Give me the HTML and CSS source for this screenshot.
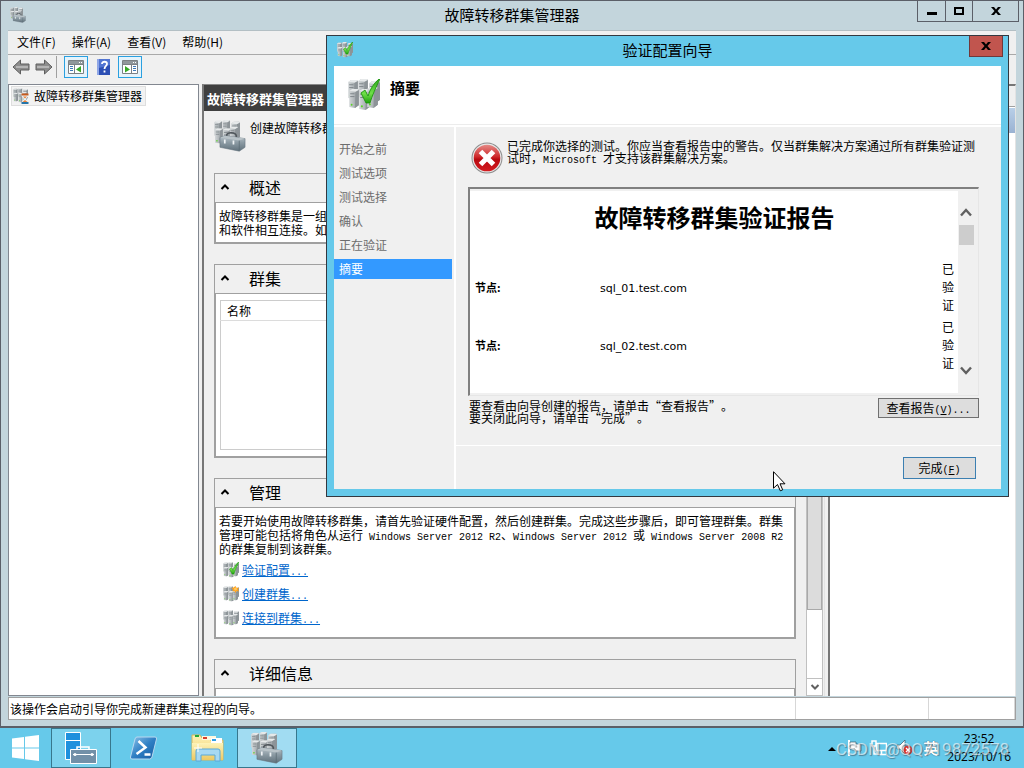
FILE: index.html
```html
<!DOCTYPE html>
<html lang="zh-CN">
<head>
<meta charset="utf-8">
<meta name="viewport" content="width=device-width, initial-scale=1">
<title>故障转移群集管理器</title>
<link rel="stylesheet" href="styles.css">
</head>
<body>
<svg class="sprite" width="0" height="0" aria-hidden="true">
  <defs>
    <linearGradient id="steel" x1="0" x2="1" y1="0" y2="0">
      <stop offset="0" stop-color="#d3d7d9"/><stop offset=".5" stop-color="#b0b6b9"/><stop offset="1" stop-color="#868d91"/>
    </linearGradient>
    <linearGradient id="green" x1="0" x2="0" y1="0" y2="1">
      <stop offset="0" stop-color="#2fa51f"/><stop offset=".6" stop-color="#6fe048"/><stop offset="1" stop-color="#22a010"/>
    </linearGradient>
    <linearGradient id="box" x1="0" x2="0" y1="0" y2="1">
      <stop offset="0" stop-color="#b9c4ca"/><stop offset=".45" stop-color="#8b9aa3"/><stop offset="1" stop-color="#60717b"/>
    </linearGradient>
    <linearGradient id="red" x1="0" x2="0" y1="0" y2="1">
      <stop offset="0" stop-color="#e58a86"/><stop offset=".45" stop-color="#cf2a2c"/><stop offset=".55" stop-color="#b80a10"/><stop offset="1" stop-color="#d41c20"/>
    </linearGradient>
    <linearGradient id="psBlue" x1="0" x2="1" y1="0" y2="1">
      <stop offset="0" stop-color="#8ec4ea"/><stop offset=".5" stop-color="#2f7fc4"/><stop offset="1" stop-color="#155a9f"/>
    </linearGradient>
    <linearGradient id="folder" x1="0" x2="0" y1="0" y2="1">
      <stop offset="0" stop-color="#fdf3b8"/><stop offset="1" stop-color="#edc963"/>
    </linearGradient>
  </defs>
  <symbol id="tower" viewBox="0 0 10 20">
    <path d="M0 2 3 0h6l1 1v16l-4 3-6-1z" fill="url(#steel)"/>
    <path d="M6.500 3 10 1v16l-4 3z" fill="#8d9498"/>
    <path d="M0 2 3 0h6l1 1-3.500 2z" fill="#e6e9ea"/>
    <path d="M1 5h4.500M1 8h4.500" stroke="#7c8387" stroke-width="1"/>
    <circle cx="2.500" cy="16.500" r="1" fill="#5bd327"/>
  </symbol>
  <symbol id="towers" viewBox="0 0 32 32">
    <use href="#tower" x="0" y="1" width="10" height="19"/>
    <use href="#tower" x="10" y="0" width="10" height="19"/>
    <use href="#tower" x="21" y="0" width="11" height="26"/>
    <use href="#tower" x="1" y="10" width="10" height="19"/>
    <use href="#tower" x="11" y="10" width="11" height="21"/>
    <use href="#tower" x="19" y="8" width="11" height="21"/>
  </symbol>
  <symbol id="check-mark" viewBox="0 0 32 32">
    <path d="M13 14 17 11 20 17C22 10 26 4 31 0h1C28 8 24 17 22 24h-4z" fill="url(#green)" stroke="#159208" stroke-width=".8"/>
  </symbol>
  <symbol id="cluster-ok" viewBox="0 0 32 32">
    <use href="#towers" width="32" height="32"/><use href="#check-mark" width="32" height="32"/>
  </symbol>
  <symbol id="cluster-new" viewBox="0 0 32 32">
    <use href="#towers" width="32" height="32"/>
    <path d="m25 0 2 4 5-1-2 4 2 4-5-1-2 4-2-4-4 1 1-4-3-3 4-1z" fill="#ffa21c"/><circle cx="25" cy="6" r="3" fill="#ffc85e"/>
  </symbol>
  <symbol id="toolbox" viewBox="0 0 28 20">
    <path d="M8 6V3c1-3 9-3 10 1v3" fill="none" stroke="#50575c" stroke-width="1.600"/>
    <path d="M1 6 6 4l21 3v9l-6 4L1 16z" fill="url(#box)" stroke="#66757e" stroke-width=".6"/>
    <path d="M1 6 6 4l21 3-6 2z" fill="#b9c3c8"/>
    <path d="M21 9v10" stroke="#586973" stroke-width=".8"/>
    <path d="M6 8v4M15 9v4" stroke="#eef2f4" stroke-width="1.800"/>
  </symbol>
  <symbol id="cluster-manager" viewBox="0 0 32 32">
    <use href="#towers" width="26" height="26"/><use href="#toolbox" x="5" y="11" width="27" height="21"/>
  </symbol>
  <symbol id="cluster-wait" viewBox="0 0 32 32">
    <use href="#towers" width="30" height="30"/>
    <path d="M17 12h14v4l-5 6 5 6v4H17v-4l5-6-5-6z" fill="#e8f3fa"/>
    <path d="M17 11h14v4H17z" fill="#c85a1c"/><path d="M17 28h14v4H17z" fill="#2775a8"/>
    <path d="m20 17 4 4 4-4zM19 28l5-4 5 4z" fill="#f08334"/>
  </symbol>
  <symbol id="caret-up" viewBox="0 0 10 8"><path d="M1.500 6 5 2.500 8.500 6" fill="none" stroke="currentColor" stroke-width="2"/></symbol>
  <symbol id="chevron-up" viewBox="0 0 12 10"><path d="M1 8.500 6 3l5 5.500" fill="none" stroke="currentColor" stroke-width="2.400"/></symbol>
  <symbol id="pane-icon" viewBox="0 0 16 14">
    <path d="M.5.5h15v13H.5z" fill="#fff" stroke="#7b8084"/><path d="M1 1h14v3H1z" fill="#90979b"/>
    <path d="M11 2.500h1M13 2.500h1" stroke="#fff"/><path d="M6.500 4v10M1 4.500h14" stroke="#7b8084"/>
    <path d="M2 6.500h3M2 8.500h3M2 10.500h3" stroke="#3e79b8"/>
  </symbol>
</svg>

<div class="desktop">
  <main class="window">
    <header class="titlebar">
      <svg class="icon16" aria-hidden="true"><use href="#cluster-manager"/></svg>
      <h1 class="window-title">故障转移群集管理器</h1>
      <div class="window-controls">
        <button class="win-btn" aria-label="最小化"><svg width="10" height="10"><path d="M0 6h10v3H0z"/></svg></button>
        <button class="win-btn" aria-label="最大化"><svg width="10" height="10"><path d="M1 2h8v6H1z" fill="none" stroke="#000" stroke-width="2"/></svg></button>
        <button class="win-btn win-close" aria-label="关闭"><svg width="10" height="10"><path d="M0 1h3l2 2.500L7 1h3L6.500 5 10 9H7L5 6.500 3 9H0l3.500-4z"/></svg></button>
      </div>
    </header>

    <nav class="menubar">
      <button>文件(F)</button><button>操作(A)</button><button>查看(V)</button><button>帮助(H)</button>
    </nav>

    <div class="toolbar">
      <button class="tool" aria-label="后退"><svg width="18" height="16"><path d="M1 8 8.500 1v4H17v6H8.500v4z" fill="#8d8d8d" stroke="#5e5e5e"/><path d="M4 8h12" stroke="#b5b5b5" stroke-width="2"/></svg></button>
      <button class="tool" aria-label="前进"><svg width="18" height="16"><path d="M17 8 9.500 1v4H1v6h8.500v4z" fill="#8d8d8d" stroke="#5e5e5e"/><path d="M2 8h12" stroke="#b5b5b5" stroke-width="2"/></svg></button>
      <span class="divider"></span>
      <button class="tool tool-on" aria-label="显示/隐藏控制台树"><svg width="16" height="14"><use href="#pane-icon"/><path d="m13 6-5 3.500 5 3z" fill="#35a825"/></svg></button>
      <button class="tool tool-help" aria-label="帮助"><svg width="13" height="16"><path d="M0 0h13v16H0z" fill="#2d4fb4"/><path d="M0 0h2v16H0z" fill="#8fa6e6"/><path d="M2 0h11v6L2 9z" fill="#5275d2"/><path d="M5 5c0-3 5-3 5 0 0 2-2.500 2-2.500 5M7.500 11.500v2" fill="none" stroke="#fff" stroke-width="1.800"/></svg></button>
      <button class="tool tool-on" aria-label="显示/隐藏操作窗格"><svg width="16" height="14"><path d="M.5.5h15v13H.5z" fill="#fff" stroke="#7b8084"/><path d="M1 1h14v3H1z" fill="#90979b"/><path d="M11 2.500h1M13 2.500h1" stroke="#fff"/><path d="M9.500 4v10M1 4.500h14" stroke="#7b8084"/><path d="M11 6.500h3M11 8.500h3M11 10.500h3" stroke="#3e79b8"/><path d="m3 6 5 3.500-5 3z" fill="#35a825"/></svg></button>
    </div>

    <div class="panes">
      <aside class="tree">
        <button class="tree-node"><svg class="icon16" aria-hidden="true"><use href="#cluster-wait"/></svg>故障转移群集管理器</button>
      </aside>

      <section class="center">
        <h2 class="center-title">故障转移群集管理器</h2>
        <div class="center-main">
          <div class="content">
            <div class="intro"><svg class="icon32" aria-hidden="true"><use href="#cluster-manager"/></svg><p>创建故障转移群集</p></div>
            <section class="card">
              <h3 class="card-head"><svg class="caret" aria-hidden="true"><use href="#caret-up"/></svg>概述</h3>
              <div class="card-body"><p>故障转移群集是一组<br>和软件相互连接。如</p></div>
            </section>
            <section class="card">
              <h3 class="card-head"><svg class="caret" aria-hidden="true"><use href="#caret-up"/></svg>群集</h3>
              <div class="card-body card-list">
                <table class="cluster-table"><thead><tr><th>名称</th></tr></thead><tbody><tr><td></td></tr></tbody></table>
              </div>
            </section>
            <section class="card">
              <h3 class="card-head"><svg class="caret" aria-hidden="true"><use href="#caret-up"/></svg>管理</h3>
              <div class="card-body card-manage">
                <p>若要开始使用故障转移群集，请首先验证硬件配置，然后创建群集。完成这些步骤后，即可管理群集。群集<br>管理可能包括将角色从运行<span class="mono"> Windows Server 2012 R2</span>、<span class="mono">Windows Server 2012 </span>或<span class="mono"> Windows Server 2008 R2</span><br>的群集复制到该群集。</p>
                <ul class="links">
                  <li><svg class="icon16" aria-hidden="true"><use href="#cluster-ok"/></svg><a href="#validate">验证配置<span class="mono">...</span></a></li>
                  <li><svg class="icon16" aria-hidden="true"><use href="#cluster-new"/></svg><a href="#create">创建群集<span class="mono">...</span></a></li>
                  <li><svg class="icon16" aria-hidden="true"><use href="#towers"/></svg><a href="#connect">连接到群集<span class="mono">...</span></a></li>
                </ul>
              </div>
            </section>
            <section class="card">
              <h3 class="card-head"><svg class="caret" aria-hidden="true"><use href="#caret-up"/></svg>详细信息</h3>
              <div class="card-body card-details"></div>
            </section>
          </div>
          <div class="scrollbar">
            <button class="scroll-btn" aria-label="向上滚动"><svg class="caret" aria-hidden="true"><use href="#caret-up"/></svg></button>
            <div class="scroll-thumb"></div>
            <div class="scroll-rest"></div>
            <button class="scroll-btn" aria-label="向下滚动"><svg class="caret flip" aria-hidden="true"><use href="#caret-up"/></svg></button>
          </div>
        </div>
      </section>

      <aside class="actions">
        <div class="actions-head"></div>
        <div class="actions-group"></div>
      </aside>
    </div>

    <footer class="statusbar"><span class="status-text">该操作会启动引导你完成新建群集过程的向导。</span><span class="status-a"></span><span class="status-b"></span></footer>
  </main>

  <footer class="taskbar">
    <button class="task task-start" aria-label="开始"><svg width="28" height="28"><path d="M0 4.500 12 3v10.500H0zM13 2.800 27 1v12.500H13zM0 14.500h12V25L0 23.500zM13 14.500h14V27l-14-1.800z" fill="#fff"/></svg></button>
    <button class="task task-open" aria-label="服务器管理器"><svg width="32" height="32"><path d="M.5.500h15v27h-15z" fill="#1e90dd" stroke="#fff"/><path d="M0 8.500h16" stroke="#fff"/><path d="M12 17v-2h12v2" fill="none" stroke="#fff" stroke-width="1.500"/><path d="M5.500 17.500h26v14h-26z" fill="#7290a8" stroke="#fff"/><path d="M8 22.500h21" stroke="#fff"/><circle cx="10" cy="22.500" r="1.500" fill="#fff"/><circle cx="27" cy="22.500" r="1.500" fill="#fff"/></svg></button>
    <button class="task task-ps" aria-label="PowerShell"><svg width="28" height="24"><path d="M7 1h18q2 0 1.500 2L22 21q-.5 2-2.500 2H2Q0 23 .5 21L5 3q.5-2 2-2z" fill="url(#psBlue)" stroke="#b8d8f0"/><path d="m8.500 5 7 6.500-9 6.500M14.500 18.500h6" fill="none" stroke="#fff" stroke-width="2.500"/></svg></button>
    <button class="task task-files" aria-label="文件资源管理器"><svg width="33" height="30"><path d="M1 5V2h8l2 3h6l2 2h13v20H1z" fill="url(#folder)" stroke="#d6b65a"/><path d="M4 2h4v2H4z" fill="#23a83a"/><path d="M11 3h14v4H11z" fill="#fff8df"/><path d="M12 4h4v2h-4z" fill="#d8402d"/><path d="M20 5h11v5H20z" fill="#fff"/><path d="M21 6h4v2h-4z" fill="#2f9fe6"/><path d="M1 10h31v17H1z" fill="url(#folder)"/><path d="M5 28V18q0-2 2-2h20q2 0 2 2v10h-5v-6H10v6z" fill="#a7d9f3" stroke="#5aa9d8"/><path d="M7 11v8M3 15h8" stroke="#fff"/></svg></button>
    <button class="task task-active" aria-label="故障转移群集管理器"><svg class="icon32" aria-hidden="true"><use href="#cluster-manager"/></svg></button>
    <div class="tray">
      <svg width="8" height="5"><path d="M0 5 4 1l4 4z"/></svg>
      <svg class="tray-flag" width="14" height="16"><path d="M1 0v16" stroke="#fff" stroke-width="2"/><path d="M2 2h6v2h5v7H7V9H2z" fill="#fff" stroke="#34596b" stroke-width=".7"/></svg>
      <svg width="16" height="16"><path d="M5.500 3.500h10v7h-10zM10.500 11v3M7 14.500h8" fill="#66c9ea" stroke="#fff" stroke-width="1.500"/><path d="M1 1h4v5H1zM3 6v8h4" fill="none" stroke="#fff" stroke-width="1.500"/></svg>
      <svg class="tray-sound" width="18" height="18"><path d="M1 6h3l5-5v14l-5-5H1z" fill="#fff" stroke="#34596b" stroke-width=".7"/><circle cx="12" cy="11" r="4.500" fill="#d8332b"/><path d="m10 9 4 4m0-4-4 4" stroke="#fff" stroke-width="1.300"/></svg>
      <span class="ime">英</span>
      <time class="clock"><span>23:52</span><span>2023/10/16</span></time>
    </div>
  </footer>

  <section class="dialog" role="dialog" aria-labelledby="wizard-title">
    <header class="dialog-bar">
      <svg class="icon16" aria-hidden="true"><use href="#cluster-ok"/></svg>
      <h2 class="dialog-title" id="wizard-title">验证配置向导</h2>
      <button class="dialog-close" aria-label="关闭"><svg width="10" height="10"><path d="M0 1h3l2 2.500L7 1h3L6.500 5 10 9H7L5 6.500 3 9H0l3.500-4z"/></svg></button>
    </header>
    <div class="dialog-inner">
      <div class="dialog-head"><svg class="icon32" aria-hidden="true"><use href="#cluster-ok"/></svg><h3>摘要</h3></div>
      <div class="dialog-body">
        <ol class="steps">
          <li>开始之前</li><li>测试选项</li><li>测试选择</li><li>确认</li><li>正在验证</li><li class="step-current" aria-current="step">摘要</li>
        </ol>
        <div class="page">
          <div class="page-main">
            <div class="notice">
              <svg class="icon32" viewBox="0 0 32 32" aria-hidden="true"><circle cx="16" cy="16" r="15.500" fill="#8c8c8c"/><circle cx="16" cy="16" r="14.500" fill="#e8e8e8"/><circle cx="16" cy="16" r="13.300" fill="url(#red)"/><path d="m9.500 9.500 13 13m0-13-13 13" stroke="#fff" stroke-width="5"/></svg>
              <p>已完成你选择的测试。你应当查看报告中的警告。仅当群集解决方案通过所有群集验证测<br>试时，<span class="mono">Microsoft </span>才支持该群集解决方案。</p>
            </div>
            <div class="report">
              <div class="report-page">
                <h4>故障转移群集验证报告</h4>
                <table class="nodes">
                  <tr><th scope="row">节点:</th><td>sql_01.test.com</td><td class="node-state">已验证</td></tr>
                  <tr><th scope="row">节点:</th><td>sql_02.test.com</td><td class="node-state">已验证</td></tr>
                </table>
              </div>
              <div class="report-scroll">
                <svg class="chevron" aria-hidden="true"><use href="#chevron-up"/></svg>
                <div class="report-thumb"></div>
                <svg class="chevron flip" aria-hidden="true"><use href="#chevron-up"/></svg>
              </div>
            </div>
            <div class="after-report">
              <p>要查看由向导创建的报告，请单击“查看报告”。<br>要关闭此向导，请单击“完成”。</p>
              <button class="btn btn-report">查看报告<span class="mono">(<u>V</u>)...</span></button>
            </div>
          </div>
          <div class="page-foot"><button class="btn btn-finish">完成<span class="mono">(<u>F</u>)</span></button></div>
        </div>
      </div>
    </div>
  </section>

  <svg class="cursor" width="13" height="21" aria-hidden="true"><path d="M.5.700v16.500l4-3.700 2.800 6.300 2.400-1-2.700-6h5z" fill="#fff" stroke="#000"/></svg>
  <span class="watermark">CSDN @QQ719872578</span>
</div>
</body>
</html>
```
FILE: styles.css
```css
* { box-sizing: border-box; }
html, body { height: 100%; }
body {
  margin: 0;
  font: 12px/14px "Noto Sans CJK SC", sans-serif;
  text-spacing-trim: space-all;
  color: #000;
  background: #66c9ea;
}
h1, h2, h3, h4, p, ul, ol { margin: 0; padding: 0; font-weight: 400; }
ul, ol { list-style: none; }
button { margin: 0; padding: 0; border: 0; background: none; color: inherit; font: inherit; }
svg { display: block; flex: none; }
.sprite { position: absolute; }
.mono { font-family: "Liberation Mono", monospace; font-size: 10px; line-height: 1px; white-space: pre; }
.icon16 { width: 16px; height: 16px; }
.icon32 { width: 32px; height: 32px; }
.caret { width: 10px; height: 8px; }
.flip { transform: rotate(180deg); }

.desktop { position: relative; height: 100vh; overflow: hidden; display: flex; flex-direction: column; }

.window {
  flex: 1; min-height: 0;
  display: flex; flex-direction: column;
  padding: 0 7px 6px;
  border: 1px solid #5b5f68; border-bottom-width: 2px;
  background: #c3d5dc;
}
.titlebar { display: grid; grid-template-columns: 1fr auto 1fr; align-items: start; height: 29px; padding: 0 2px; flex: none; }
.titlebar .icon16 { margin-top: 6px; }
.window-title { font-size: 15px; line-height: 28px; }
.window-controls { justify-self: end; display: flex; border: 1px solid #5b5f68; border-top: 0; margin-right: -5px; }
.win-btn { display: grid; place-items: center; width: 27px; height: 20px; }
.win-btn + .win-btn { border-left: 1px solid #5b5f68; }
.win-close { width: 46px; }

.menubar { display: flex; gap: 16px; height: 25px; padding: 0 9px 2px; border-top: 1px solid #b3bfc4; border-bottom: 1px solid #a9a9a9; background: #f0f0f0; flex: none; }
.toolbar { display: flex; align-items: center; height: 29px; padding: 0 1px 5px; background: #f0f0f0; flex: none; }
.tool { display: grid; place-items: center; width: 23px; height: 22px; }
.tool-on { width: 24px; border: 1px solid #2aa0e0; background: #e5f3fb; }
.tool-help { width: 30px; }
.divider { width: 1px; height: 22px; background: #a0a0a0; margin: 0 7px 0 1px; }

.panes { flex: 1; min-height: 0; display: grid; grid-template-columns: 191px minmax(0, 1fr) 188px; column-gap: 3px; background: #f0f0f0; }
.tree { border: 1px solid #828790; background: #fff; padding: 1px 2px; }
.tree-node { display: flex; align-items: center; gap: 5px; height: 20px; padding: 0 3px 1px 1px; border: 1px solid #dedede; background: #f2f2f2; }

.center { display: flex; flex-direction: column; min-height: 0; border-left: 2px solid #777; border-top: 1px solid #888; border-right: 1px solid #e3e3e3; }
.center-title { height: 26px; padding-left: 3px; background: #3f3f3f; color: #fff; font-size: 13px; font-weight: 700; line-height: 28px; flex: none; }
.center-main { flex: 1; min-height: 0; display: flex; }
.content { flex: 1; min-width: 0; overflow: hidden; padding: 9px 10px 0; }
.intro { display: flex; gap: 4px; height: 33px; margin-bottom: 20px; }
.intro p { padding-top: 1px; }
.card { margin-bottom: 20px; border: 1px solid #a0a0a0; border-bottom-width: 2px; background: #f0f0f0; }
.card-head { display: flex; align-items: center; gap: 19px; height: 28px; padding: 0 0 2px 5px; font-size: 16px; }
.card-body { padding: 6px 3px 5px; border: 1px solid #a0a0a0; border-bottom: 0; background: #fff; }
.card-list { padding: 6px 4px; }
.cluster-table { width: 100%; height: 150px; border: 1px solid #ccc; border-collapse: collapse; }
.cluster-table th { height: 20px; padding: 0 0 0 6px; border-bottom: 1px solid #dcdcdc; font-weight: 400; text-align: left; }
.card-manage { padding-bottom: 5px; }
.links { padding: 2px 4px; }
.links li { display: flex; align-items: center; gap: 3px; height: 24px; }
.links a { color: #0066cc; text-decoration: underline; }
.card-details { height: 40px; }

.scrollbar { width: 17px; margin-right: 1px; display: flex; flex-direction: column; border: 1px solid #c0c0c0; background: #fff; flex: none; }
.scroll-btn { display: grid; place-items: center; height: 16px; color: #606060; flex: none; }
.scroll-thumb { flex: 7; border: 1px solid #a9a9a9; background: #dcdcdc; }
.scroll-rest { flex: 1; border-bottom: 1px solid #c0c0c0; }

.actions { border-left: 2px solid #777; border-top: 2px solid #777; border-right: 1px solid #e3e3e3; background: #fff; }
.actions-head { height: 21px; border-bottom: 1px solid #a0a0a0; background: #f0f0f0; }
.actions-group { height: 25px; margin-top: 1px; background: linear-gradient(#b8cfe8, #9ab2d2); }

.statusbar { display: flex; height: 23px; margin-top: 1px; border: 1px solid #a0a0a0; background: #fff; line-height: 22px; flex: none; }
.status-text { flex: 1; padding-left: 1px; }
.status-a { width: 133px; border-left: 1px solid #d7d7d7; }
.status-b { width: 87px; border-left: 1px solid #d7d7d7; border-right: 1px solid #d7d7d7; }

.taskbar { display: flex; height: 40px; background: #66c9ea; flex: none; }
.task { display: grid; place-items: center; width: 60px; }
.task-start { width: 51px; }
.task-open { border: 1px solid #37778d; background: #7cd2ed; }
.task-ps { width: 66px; }
.task-active { border: 1px solid #37778d; background: #a1dcf2; }
.tray { display: flex; align-items: center; gap: 9px; margin-left: auto; padding-right: 13px; }
.tray-flag { margin-left: 3px; }
.ime { color: #fff; font-size: 15px; font-weight: 700; text-shadow: 0 0 1px #123; }
.clock { display: flex; flex-direction: column; align-items: center; font: 12px/18px "Open Sans", sans-serif; }

.dialog { position: absolute; left: 326px; right: 15px; top: 35px; padding: 0 7px 7px; border: 1px solid #333840; background: #66c9ea; }
.dialog-bar { display: grid; grid-template-columns: 1fr auto 1fr; align-items: start; height: 30px; padding: 0 3px; }
.dialog-bar .icon16 { margin-top: 6px; }
.dialog-title { font-size: 15px; line-height: 28px; }
.dialog-close { justify-self: end; display: grid; place-items: center; width: 34px; height: 21px; margin-right: -5px; border: 1px solid #71383a; border-top: 0; background: #c1554e; }
.dialog-inner { background: #f0f0f0; }
.dialog-head { display: flex; gap: 10px; height: 61px; padding: 13px 14px 0; border-bottom: 2px solid #fff; background: linear-gradient(#fff 58px, #ececec 58px); }
.dialog-head h3 { font-size: 15px; font-weight: 700; line-height: 18px; }
.dialog-body { display: grid; grid-template-columns: 122px minmax(0, 1fr); }
.steps { padding: 12px 2px 0 0; border-right: 2px solid #fff; display: flex; flex-direction: column; gap: 4px; color: #6d6d6d; line-height: 20px; }
.steps li { height: 20px; padding-left: 5px; }
.steps .step-current { background: #3399ff; color: #fff; }
.page-main { padding: 13px 22px 0 12px; height: 318px; }
.notice { display: flex; gap: 4px; padding-left: 3px; line-height: 12px; white-space: nowrap; }
.notice .icon32 { margin-top: 2px; }
.report { display: flex; margin-top: 13px; padding: 2px 0 2px; height: 209px; border: 2px solid; border-color: #808080 #e6e6e6 #e6e6e6 #808080; border-right-width: 1px; border-bottom-width: 1px; }
.report-page { flex: 1; min-width: 0; padding: 9px 4px 0 5px; background: #fff; }
.report-page h4 { margin-bottom: 24px; font-size: 24px; font-weight: 700; line-height: 34px; text-align: center; }
.nodes { width: 100%; border-collapse: collapse; }
.nodes tr { height: 58px; }
.nodes th { width: 125px; padding: 0; font-size: 11px; text-align: left; }
.nodes td { padding: 4px 0 0; font: 11px/18px "DejaVu Sans", sans-serif; }
.nodes .node-state { width: 12px; padding: 0; font: 12px/18px "Noto Sans CJK SC", sans-serif; }
.report-scroll { width: 20px; padding: 16px 4px 17px 0; display: flex; flex-direction: column; align-items: center; color: #606060; }
.chevron { width: 12px; height: 10px; }
.chevron.flip { margin-top: auto; }
.report-thumb { width: 15px; height: 20px; margin-top: 8px; background: #cdcdcd; }
.after-report { display: flex; justify-content: space-between; padding-left: 1px; padding-top: 2px; line-height: 12px; }
.after-report p { padding-top: 2px; }
.btn { border: 1px solid #707070; background: #dddddd; line-height: 18px; }
.btn-report { width: 101px; height: 20px; }
.page-foot { display: flex; justify-content: flex-end; height: 44px; padding: 11px 25px 0 0; border-top: 1px solid #fff; }
.btn-finish { width: 73px; height: 22px; border-color: #3c7fb1; }

.cursor { position: absolute; left: 773px; top: 471px; }
.watermark { position: absolute; right: 15px; bottom: 9px; font: 17px/20px Roboto, sans-serif; color: rgba(255, 255, 255, .6); text-shadow: 1px 1px 1px rgba(60, 80, 95, .6); }
```
